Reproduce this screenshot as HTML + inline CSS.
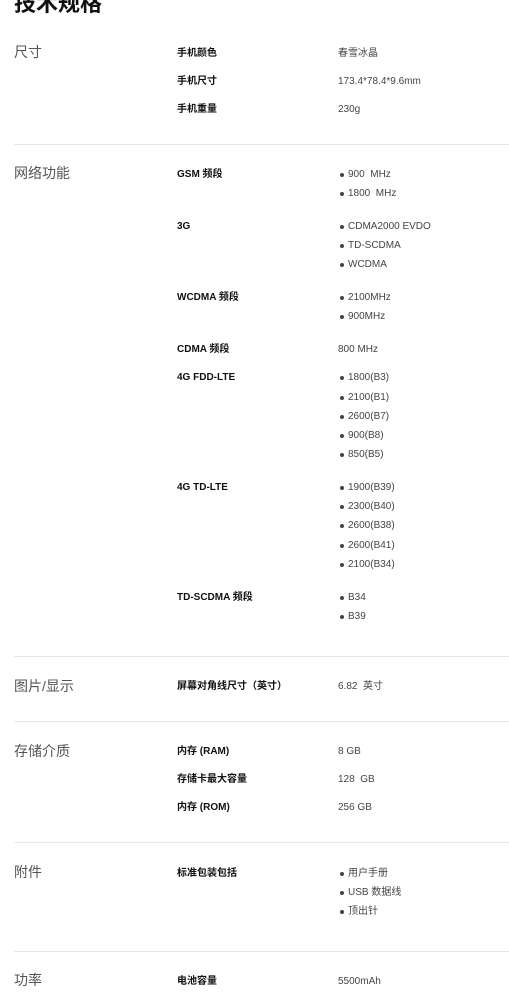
<!DOCTYPE html>
<html><head><meta charset="utf-8"><style>
body{margin:0;width:509px;height:1000px;overflow:hidden;background:#fff;position:relative;font-family:"Liberation Sans","Noto Sans CJK SC",sans-serif;color:#333}
.t{position:absolute;left:14px;top:-9px;font-size:22px;font-weight:bold;color:#111;line-height:26px}
.s{position:absolute;left:14px;font-size:14px;color:#555;line-height:18px;margin-top:1px}
.k{position:absolute;left:177px;font-size:10px;font-weight:bold;color:#111;line-height:14px;margin-top:2px}
.v{position:absolute;left:338px;font-size:10px;color:#444;line-height:14px;margin-top:2px}
.b{position:absolute;left:348px;font-size:10px;color:#444;line-height:14px;margin-top:2px}
.b:before{content:"";position:absolute;left:-8px;top:5px;width:4px;height:4px;border-radius:50%;background:#444}
.d{position:absolute;left:14px;right:0;height:1px;background:#e6e6e6}
</style></head><body>
<div class="t">技术规格</div>

<div class="s" style="top:42px">尺寸</div>
<div class="k" style="top:45px">手机颜色</div><div class="v" style="top:45px">春雪冰晶</div>
<div class="k" style="top:73px">手机尺寸</div><div class="v" style="top:73px">173.4*78.4*9.6mm</div>
<div class="k" style="top:101px">手机重量</div><div class="v" style="top:101px">230g</div>
<div class="d" style="top:144px"></div>

<div class="s" style="top:163px">网络功能</div>
<div class="k" style="top:166px">GSM 频段</div>
<div class="b" style="top:166px">900&nbsp; MHz</div><div class="b" style="top:185px">1800&nbsp; MHz</div>
<div class="k" style="top:218px">3G</div>
<div class="b" style="top:218px">CDMA2000 EVDO</div><div class="b" style="top:237px">TD-SCDMA</div><div class="b" style="top:256px">WCDMA</div>
<div class="k" style="top:289px">WCDMA 频段</div>
<div class="b" style="top:289px">2100MHz</div><div class="b" style="top:308px">900MHz</div>
<div class="k" style="top:341px">CDMA 频段</div><div class="v" style="top:341px">800 MHz</div>
<div class="k" style="top:369px">4G FDD-LTE</div>
<div class="b" style="top:369px">1800(B3)</div><div class="b" style="top:389px">2100(B1)</div><div class="b" style="top:408px">2600(B7)</div><div class="b" style="top:427px">900(B8)</div><div class="b" style="top:446px">850(B5)</div>
<div class="k" style="top:479px">4G TD-LTE</div>
<div class="b" style="top:479px">1900(B39)</div><div class="b" style="top:498px">2300(B40)</div><div class="b" style="top:517px">2600(B38)</div><div class="b" style="top:537px">2600(B41)</div><div class="b" style="top:556px">2100(B34)</div>
<div class="k" style="top:589px">TD-SCDMA 频段</div>
<div class="b" style="top:589px">B34</div><div class="b" style="top:608px">B39</div>
<div class="d" style="top:656px"></div>

<div class="s" style="top:676px">图片/显示</div>
<div class="k" style="top:678px">屏幕对角线尺寸（英寸）</div><div class="v" style="top:678px">6.82&nbsp; 英寸</div>
<div class="d" style="top:721px"></div>

<div class="s" style="top:741px">存储介质</div>
<div class="k" style="top:743px">内存 (RAM)</div><div class="v" style="top:743px">8 GB</div>
<div class="k" style="top:771px">存储卡最大容量</div><div class="v" style="top:771px">128&nbsp; GB</div>
<div class="k" style="top:799px">内存 (ROM)</div><div class="v" style="top:799px">256 GB</div>
<div class="d" style="top:842px"></div>

<div class="s" style="top:862px">附件</div>
<div class="k" style="top:865px">标准包装包括</div>
<div class="b" style="top:865px">用户手册</div><div class="b" style="top:884px">USB 数据线</div><div class="b" style="top:903px">顶出针</div>
<div class="d" style="top:951px"></div>

<div class="s" style="top:970px">功率</div>
<div class="k" style="top:973px">电池容量</div><div class="v" style="top:973px">5500mAh</div>
</body></html>
